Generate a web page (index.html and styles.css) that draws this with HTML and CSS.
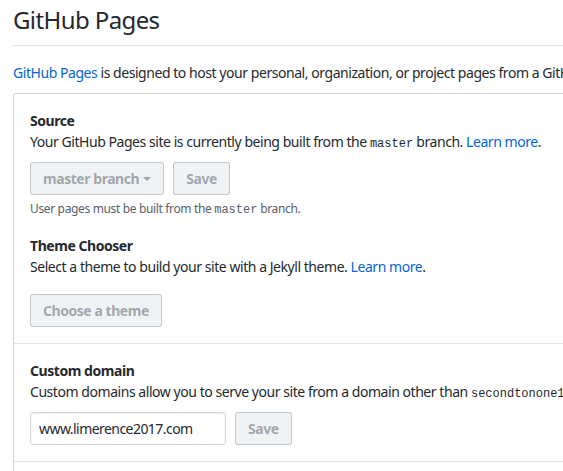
FILE: index.html
```html
<!DOCTYPE html>
<html>
<head>
<meta charset="utf-8">
<link rel="stylesheet" href="styles.css">
</head>
<body>
<div class="page">
  <div class="subhead">
    <h1 class="subhead-heading">GitHub Pages</h1>
  </div>
  <p class="intro"><a href="#">GitHub Pages</a> is designed to host your personal, organization, or project pages from a GitHub repository.</p>
  <div class="box">
    <div class="section">
      <h3 class="title">Source</h3>
      <p class="desc">Your GitHub Pages site is currently being built from the <code>master</code> branch. <a href="#">Learn more</a>.</p>
      <div class="row">
        <button class="btn">master branch <span class="caret"></span></button>
        <button class="btn">Save</button>
      </div>
      <p class="note">User pages must be built from the <code>master</code> branch.</p>
      <h3 class="title theme">Theme Chooser</h3>
      <p class="desc">Select a theme to build your site with a Jekyll theme. <a href="#">Learn more</a>.</p>
      <div class="row row-theme">
        <button class="btn">Choose a theme</button>
      </div>
    </div>
    <div class="section">
      <h3 class="title">Custom domain</h3>
      <p class="desc">Custom domains allow you to serve your site from a domain other than <code>secondtonone1.github.io</code>. <a href="#">Learn more</a>.</p>
      <div class="row">
        <input class="input" type="text" value="www.limerence2017.com">
        <button class="btn">Save</button>
      </div>
    </div>
    <div class="section">
      <h3 class="title">Enforce HTTPS</h3>
    </div>
  </div>
</div>
</body>
</html>
```

FILE: styles.css
```css
html, body {
  margin: 0;
  padding: 0;
  overflow: hidden;
  background: #fff;
}
body {
  font-family: "Noto Sans", "Open Sans", sans-serif;
  font-size: 14px;
  line-height: 21px;
  letter-spacing: -0.45px;
  color: #24292e;
}
.page {
  width: 1000px;
  padding-left: 13px;
}
a {
  color: #0366d6;
  text-decoration: none;
}
code {
  font-family: "Liberation Mono", "DejaVu Sans Mono", monospace;
  font-size: 12px;
  line-height: 1;
  letter-spacing: 0;
}
.subhead {
  padding-top: 2px;
  padding-bottom: 7px;
  border-bottom: 1px solid #e1e4e8;
}
.subhead-heading {
  margin: 0;
  font-size: 24px;
  font-weight: 400;
  line-height: 36px;
  letter-spacing: -0.6px;
}
.intro {
  margin: 16px 0 10px;
  white-space: nowrap;
}
.box {
  border: 1px solid #d1d5da;
  border-radius: 3px;
}
.section {
  padding: 16px;
  border-bottom: 1px solid #e1e4e8;
}
.title {
  margin: 0;
  font-size: 14px;
  font-weight: 700;
  line-height: 21px;
}
.title.theme {
  margin-top: 17px;
}
.desc {
  margin: 0;
  white-space: nowrap;
}
.row {
  display: flex;
  gap: 9px;
  margin-top: 10px;
}
.row-theme {
  margin-top: 17px;
}
.btn {
  font-family: inherit;
  font-size: 14px;
  font-weight: 700;
  line-height: 20px;
  letter-spacing: -0.45px;
  height: 33px;
  padding: 0 12px;
  color: rgba(36, 41, 46, 0.4);
  background: #eff3f6;
  border: 1px solid rgba(27, 31, 35, 0.2);
  border-radius: 3px;
  display: flex;
  align-items: center;
  gap: 4px;
}
.caret {
  width: 0;
  height: 0;
  border-left: 4px solid transparent;
  border-right: 4px solid transparent;
  border-top: 4px solid rgba(36, 41, 46, 0.4);
}
.note {
  margin: 5px 0 0;
  font-size: 12px;
  line-height: 18px;
  letter-spacing: -0.35px;
  color: #586069;
}
.input {
  box-sizing: border-box;
  width: 196px;
  height: 33px;
  padding: 0 8px;
  font-family: inherit;
  font-size: 14px;
  letter-spacing: -0.55px;
  color: #24292e;
  border: 1px solid #d1d5da;
  border-radius: 3px;
  box-shadow: inset 0 1px 2px rgba(27, 31, 35, 0.075);
}
```
